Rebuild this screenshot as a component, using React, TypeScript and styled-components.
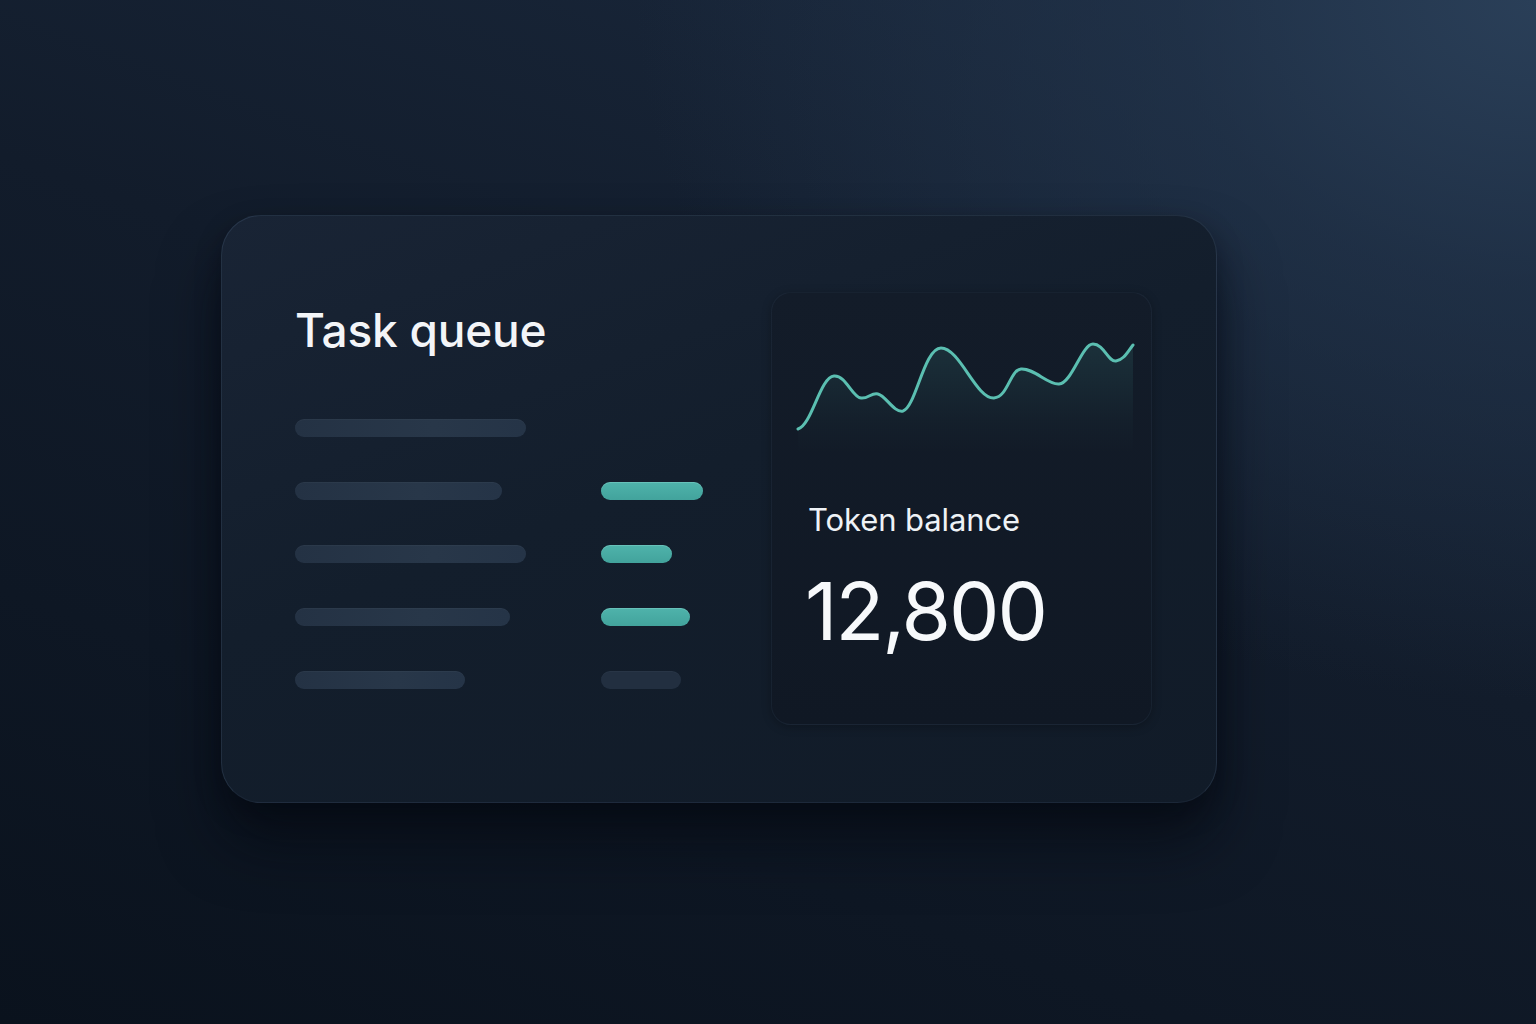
import styled, { createGlobalStyle } from "styled-components";

const GlobalStyle = createGlobalStyle`
  html, body {
    margin: 0;
    padding: 0;
    height: 100%;
  }
  body {
    font-family: Inter, "Noto Sans", sans-serif;
    background: #0c1521;
    overflow: hidden;
  }
`;

const Page = styled.div`
  width: 1536px;
  height: 1024px;
  box-sizing: border-box;
  padding: 215px 0 0 221px;
  background:
    radial-gradient(ellipse 900px 700px at 100% 0%, #2a3f58 0%, rgba(36, 55, 79, 0.6) 40%, rgba(20, 32, 48, 0) 100%),
    linear-gradient(200deg, #1b2a3f 0%, #121c2b 45%, #0a121d 100%);
`;

const Card = styled.div`
  width: 996px;
  height: 588px;
  box-sizing: border-box;
  padding: 76px 64px 77px 73px;
  display: flex;
  justify-content: space-between;
  border-radius: 40px;
  background: linear-gradient(160deg, #192435 0%, #131e2c 45%, #111b28 100%);
  border: 1px solid rgba(120, 150, 185, 0.16);
  border-bottom-color: rgba(120, 150, 185, 0.08);
  box-shadow: 0 40px 60px rgba(3, 7, 14, 0.55), 0 10px 24px rgba(3, 7, 14, 0.35);
`;

const QueueColumn = styled.div`
  display: flex;
  flex-direction: column;
  width: 420px;
`;

const Title = styled.h1`
  margin: 10px 0 0;
  font-size: 46px;
  line-height: 56px;
  font-weight: 500;
  color: #f3f5f8;
  letter-spacing: -0.2px;
`;

const Rows = styled.div`
  margin-top: 61px;
  display: flex;
  flex-direction: column;
  gap: 45px;
`;

const Row = styled.div`
  display: grid;
  grid-template-columns: 306px 1fr;
  align-items: center;
  height: 18px;
`;

const Bar = styled.div<{ $w: number; $tone?: "muted" | "teal" | "dim" }>`
  width: ${(p) => p.$w}px;
  height: 18px;
  border-radius: 9px;
  background: ${(p) =>
    p.$tone === "teal"
      ? "linear-gradient(180deg, #4fb3ab 0%, #42a39c 100%)"
      : p.$tone === "dim"
      ? "#222f40"
      : "linear-gradient(90deg, #243244 0%, #283749 60%, #253447 100%)"};
  box-shadow: ${(p) =>
    p.$tone === "teal"
      ? "inset 0 1px 0 rgba(180, 240, 230, 0.25)"
      : "inset 0 1px 0 rgba(255, 255, 255, 0.03)"};
`;

const Panel = styled.div`
  width: 381px;
  height: 433px;
  box-sizing: border-box;
  border-radius: 20px;
  background: linear-gradient(180deg, #131c29 0%, #101824 100%);
  border: 1px solid rgba(120, 150, 185, 0.08);
  box-shadow: 0 2px 10px rgba(0, 0, 0, 0.25);
  display: flex;
  flex-direction: column;
  overflow: hidden;
`;

const Chart = styled.svg`
  display: block;
  width: 381px;
  height: 200px;
  flex-shrink: 0;
`;

const Label = styled.div`
  margin: 7px 0 0 36px;
  font-size: 31px;
  line-height: 40px;
  color: #eef2f6;
  font-weight: 400;
  letter-spacing: -0.1px;
`;

const Amount = styled.div`
  margin: 26px 0 0 33px;
  font-size: 80px;
  line-height: 90px;
  color: #f7f9fb;
  font-weight: 400;
  letter-spacing: -2px;
`;

const rows: { left: number; right?: number; tone?: "teal" | "dim" }[] = [
  { left: 231 },
  { left: 207, right: 102, tone: "teal" },
  { left: 231, right: 71, tone: "teal" },
  { left: 215, right: 89, tone: "teal" },
  { left: 170, right: 80, tone: "dim" },
];

const line =
  "M26,136 C40,132 48,84 62,83 C74,82 80,104 89,105 C96,106 100,99 106,101 C114,103 122,120 131,118 C144,114 152,55 169,55 C188,55 204,106 222,105 C236,104 238,77 249,76 C262,75 276,92 287,91 C300,90 310,51 321,51 C332,51 336,69 344,68 C352,67 356,58 361,52";

function App() {
  return (
    <>
      <GlobalStyle />
      <Page>
        <Card>
          <QueueColumn>
            <Title>Task queue</Title>
            <Rows>
              {rows.map((r, i) => (
                <Row key={i}>
                  <Bar $w={r.left} $tone="muted" />
                  {r.right ? <Bar $w={r.right} $tone={r.tone} /> : <span />}
                </Row>
              ))}
            </Rows>
          </QueueColumn>
          <Panel>
            <Chart viewBox="0 0 381 200">
              <defs>
                <linearGradient id="fillGrad" x1="0" y1="0" x2="0" y2="1">
                  <stop offset="0%" stopColor="#4fb3a8" stopOpacity="0.14" />
                  <stop offset="70%" stopColor="#4fb3a8" stopOpacity="0.03" />
                  <stop offset="100%" stopColor="#4fb3a8" stopOpacity="0" />
                </linearGradient>
              </defs>
              <path d={`${line} L361,160 L26,160 Z`} fill="url(#fillGrad)" />
              <path
                d={line}
                fill="none"
                stroke="#5bbfb1"
                strokeWidth="3"
                strokeLinecap="round"
                strokeLinejoin="round"
              />
            </Chart>
            <Label>Token balance</Label>
            <Amount>12,800</Amount>
          </Panel>
        </Card>
      </Page>
    </>
  );
}

export default App;
